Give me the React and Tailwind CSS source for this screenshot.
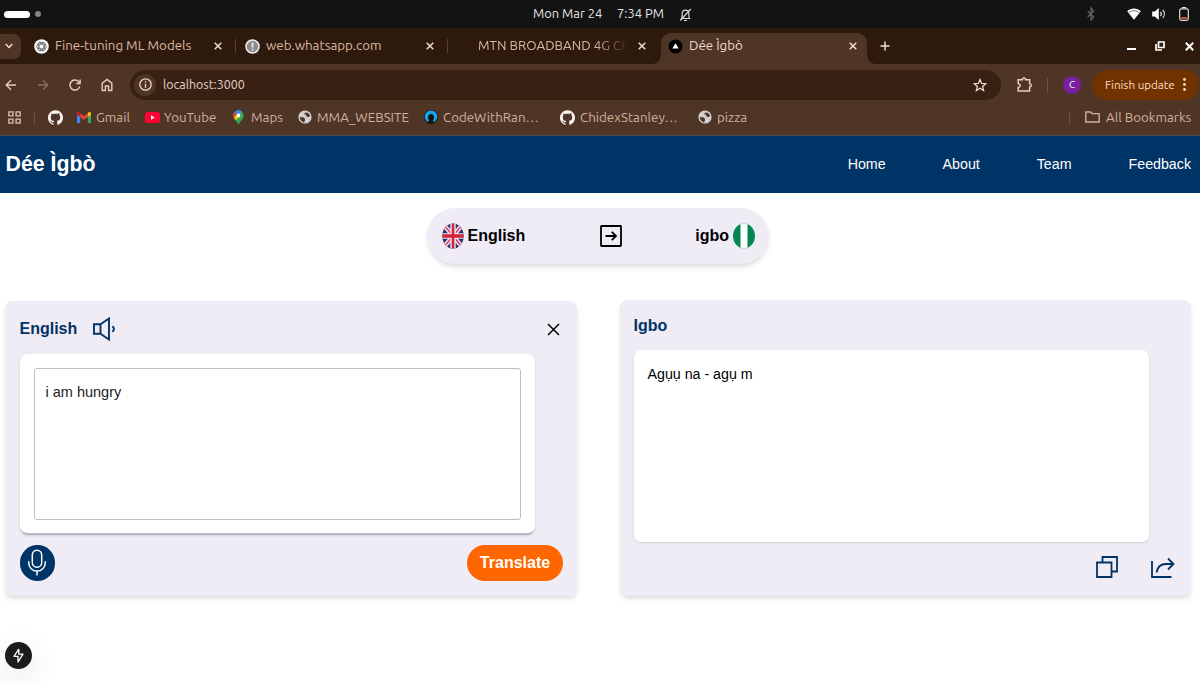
import clsx from 'clsx';
import { SiGithub } from 'react-icons/si';

const Globe = () => (
  <svg viewBox="0 0 14 14" className="w-[14px] h-[14px] shrink-0">
    <circle cx="7" cy="7" r="6.600" fill="#d2d0cf" />
    <path d="M1.700 7.200h3.600l1.700 1.600v1.700l-1 1.900C3.800 11.800 1.900 9.800 1.700 7.200zM7.200 2.600l3.200.5 1.700 2.700-1.600 1.400-2-.8-.2-1.600-2.200-.6z" fill="#4f3525" />
  </svg>
);

const Github = () => <SiGithub className="w-[15px] h-[15px] shrink-0 text-[#fdf6f0]" />;

const Gmail = () => (
  <svg viewBox="0 0 14 11" className="w-[14px] h-[11px] shrink-0">
    <path d="M0 2v8.2c0 .4.3.8.8.8h2.4V4.6z" fill="#4285f4" />
    <path d="M14 2v8.2c0 .4-.3.8-.8.8h-2.4V4.6z" fill="#34a853" />
    <path d="M3.2 1.3V5L7 7.8 10.800 5V1.300L7 4.200z" fill="#ea4335" />
    <path d="M0 1.700C0 .2 1.500-.4 2.600.6l.6.5V5L0 2.900z" fill="#c5221f" />
    <path d="M14 1.700C14 .2 12.500-.4 11.400.6l-.6.5V5L14 2.900z" fill="#fbbc04" />
  </svg>
);

const YouTube = () => (
  <svg viewBox="0 0 15 11" className="w-[15px] h-[11px] shrink-0">
    <rect width="15" height="11" rx="2.800" fill="#ff0033" />
    <path d="M6 3.300v4.400l3.800-2.200z" fill="#fff" />
  </svg>
);

const MapsPin = () => (
  <svg viewBox="0 0 11 15" className="w-[11px] h-[15px] shrink-0">
    <path d="M5.500 15C5.200 12 .3 9.500.3 5.400A5.200 5.200 0 0 1 5.500.2a5.200 5.200 0 0 1 5.200 5.200C10.700 9.500 5.800 12 5.500 15z" fill="#34a853" />
    <path d="M5.500.2A5.200 5.200 0 0 0 1.400 2.200L5.500 5.500 8.800 1.400A5 5 0 0 0 5.500.2z" fill="#4285f4" />
    <path d="M1.400 2.200A5.200 5.200 0 0 0 .9 7.800L4.200 4.400z" fill="#ea4335" />
    <path d="M.9 7.800c.5 1 1.200 1.800 1.800 2.500L7 6.400 4.100 4.500z" fill="#fbbc04" />
    <circle cx="5.500" cy="5.300" r="1.900" fill="#fff" />
  </svg>
);

const CodeWithRandom = () => (
  <svg viewBox="0 0 14 14" className="w-[14px] h-[14px] shrink-0">
    <circle cx="7" cy="7" r="7" fill="#15120f" />
    <path d="M3.800 12.200A6.300 6.300 0 1 1 10.200 12.200L9 10.200C11 8 10 4 7 4S3 8 5 10.200z" fill="#12a9ec" />
  </svg>
);

const Close = () => (
  <svg viewBox="0 0 8 8" className="w-[8px] h-[8px] shrink-0" fill="none" stroke="#f3ddd0" strokeWidth="1.500">
    <path d="M.7.700l6.600 6.600M7.300.700L.7 7.300" />
  </svg>
);

function SystemBar() {
  return (
    <div className="flex h-7 pb-px bg-[#131313] text-[#e4e4e4] text-[12.900px] items-center">
      <div className="ml-1 mt-px w-[26px] h-[7px] rounded-full bg-white"></div>
      <div className="ml-[5px] mt-px w-[6px] h-[6px] rounded-full bg-[#858585]"></div>
      <span className="ml-[492px] w-[84px] whitespace-nowrap">Mon Mar 24</span>
      <span className="w-[62px] whitespace-nowrap">7:34 PM</span>
      <svg viewBox="0 0 13 14" className="w-[13px] h-[14px] mt-[3px]" fill="none" stroke="#d8d8d8" strokeWidth="1.200">
        <path d="M2.500 10.500C3.500 9 3 7.500 3.200 5.500a3.300 3.300 0 0 1 6.600 0c.2 2-.3 3.500.7 5zM5 12.500h3M11.800 1L1.200 12.500" />
      </svg>
      <div className="ml-auto mt-px flex items-center mr-[11px]">
        <svg viewBox="0 0 8 14" className="w-[8px] h-[14px] mr-[32px]" fill="none" stroke="#666" strokeWidth="1.200">
          <path d="M.7 4l6 6L4 13V1l2.700 3-6 6" />
        </svg>
        <svg viewBox="0 0 14 12" className="w-[14px] h-[12px] mr-[11px]">
          <path d="M.2 3.300C4.100-.3 9.900-.3 13.800 3.300L7 11.800z" fill="#fff" />
          <path d="M2 4.500c3.200-2.400 6.800-2.400 10 0" fill="none" stroke="#131313" strokeWidth=".6" />
        </svg>
        <svg viewBox="0 0 14 12" className="w-[14px] h-[12px] mr-[13px]">
          <path d="M.2 3.500h2.600L6.800 0v12L2.800 8.500H.2z" fill="#fff" />
          <path d="M8.500 3.900c1 1.200 1 3 0 4.200M10.700 2c2.200 2.300 2.200 5.700 0 8" fill="none" stroke="#ddd" strokeWidth="1.200" />
        </svg>
        <svg viewBox="0 0 10 14" className="w-[10px] h-[14px]">
          <path d="M3 1.700V.500h4v1.200" fill="none" stroke="#ddd" />
          <rect x=".7" y="1.900" width="8.600" height="11.400" rx="1.800" fill="none" stroke="#dcdcdc" strokeWidth="1.200" />
          <rect x="2.200" y="10" width="5.600" height="2" fill="#d84b36" />
        </svg>
      </div>
    </div>
  );
}

function Tab({ icon, title, className, titleClass = "" }) {
  return (
    <div className={clsx("flex items-center h-full shrink-0", className)}>
      <div className="w-[15px] mr-[6px] shrink-0">{icon}</div>
      <span className={clsx("flex-1 whitespace-nowrap", titleClass)}>{title}</span>
      <Close />
    </div>
  );
}

function TabStrip() {
  return (
    <div className="flex h-9 bg-[#2e1a0c] text-[13.330px] text-[#d9b9a4] items-center">
      <div className="w-[21px] h-[25px] bg-[#4f3525] rounded-r-lg flex items-center justify-center pr-[3px] mr-[3px] shrink-0">
        <svg viewBox="0 0 8 6" className="w-[8px] h-[6px]" fill="none" stroke="#f3ddd0" strokeWidth="1.500"><path d="M.7 1L4 4.500 7.300 1" /></svg>
      </div>
      <Tab
        className="w-[211px] pl-[10px] pr-[13px]"
        title="Fine-tuning ML Models"
        icon={
          <svg viewBox="0 0 15 15" className="w-[15px] h-[15px]">
            <circle cx="7.500" cy="7.500" r="7.300" fill="#f7f7f7" />
            <g fill="none" stroke="#555" strokeWidth=".8">
              <ellipse cx="7.500" cy="7.500" rx="4.900" ry="2.500" />
              <ellipse cx="7.500" cy="7.500" rx="4.900" ry="2.500" transform="rotate(60 7.500 7.500)" />
              <ellipse cx="7.500" cy="7.500" rx="4.900" ry="2.500" transform="rotate(120 7.500 7.500)" />
            </g>
          </svg>
        }
      />
      <div className="w-px h-[14px] bg-[#5b402f] shrink-0"></div>
      <Tab
        className="w-[211px] pl-[9px] pr-[13px]"
        title="web.whatsapp.com"
        icon={
          <svg viewBox="0 0 15 15" className="w-[15px] h-[15px]">
            <circle cx="7.500" cy="7.500" r="6.500" fill="#8b8b8b" stroke="#f1f1f1" strokeWidth="1.500" />
            <path d="M7.500 3.500v5M7.500 9.800v1.800" stroke="#f1f1f1" strokeWidth="1.700" />
          </svg>
        }
      />
      <div className="w-px h-[14px] bg-[#5b402f] shrink-0"></div>
      <Tab
        className="w-[211px] pl-[9px] pr-[13px]"
        titleClass="[mask-image:linear-gradient(to_right,black_118px,transparent_150px)]"
        title="MTN BROADBAND 4G CP"
      />
      <div className="self-end w-[222px] h-full flex items-end -ml-[6px] shrink-0">
        <div className="w-2 h-2 shrink-0 bg-[radial-gradient(circle_at_0_0,transparent_7.500px,#4f3525_8px)]"></div>
        <div className="w-[206px] h-[31px] bg-[#4f3525] rounded-t-[10px]">
          <Tab
            className="pl-[7px] pb-[5px] pr-[10px] text-[#efdacc]"
            title="Dée Ìgbò"
            icon={
              <svg viewBox="0 0 15 15" className="w-[15px] h-[15px]">
                <circle cx="7.500" cy="7.500" r="7" fill="#000" />
                <path d="M7.500 4.200l3.200 5.400H4.300z" fill="#fff" />
              </svg>
            }
          />
        </div>
        <div className="w-2 h-2 shrink-0 bg-[radial-gradient(circle_at_100%_0,transparent_7.500px,#4f3525_8px)]"></div>
      </div>
      <svg viewBox="0 0 10 10" className="w-[10px] h-[10px] ml-[5px]" stroke="#f3ddd0" strokeWidth="1.500"><path d="M5 .5v9M.5 5h9" /></svg>
      <div className="ml-auto flex items-center mr-[6px]">
        <div className="w-[9px] h-[2px] bg-white mt-[6px] mr-[19px]"></div>
        <svg viewBox="0 0 10 10" className="w-[10px] h-[10px] mr-[20px]" fill="none" stroke="#fff" strokeWidth="1.700">
          <path d="M3.500 1h5.500v5.500H3.500zM1 3v6h6" />
        </svg>
        <svg viewBox="0 0 9 9" className="w-[9px] h-[9px]" stroke="#fff" strokeWidth="2"><path d="M.8.800l7.400 7.400M8.200.800L.8 8.200" /></svg>
      </div>
    </div>
  );
}

function Toolbar() {
  return (
    <div className="flex h-[41px] items-center text-[#f0cdb8]">
      <svg viewBox="0 0 12 12" className="w-[12px] h-[12px] ml-[5px] mr-[20px]" fill="none" stroke="currentColor" strokeWidth="1.400"><path d="M11 6H1.500M6 1.200L1.200 6 6 10.800" /></svg>
      <svg viewBox="0 0 12 12" className="w-[12px] h-[12px] mr-[20px]" fill="none" stroke="#8e6e5a" strokeWidth="1.400"><path d="M1 6h9.500M6 1.200L10.800 6 6 10.800" /></svg>
      <svg viewBox="0 0 12 12" className="w-[12px] h-[12px] mr-[20px]" fill="none" stroke="currentColor" strokeWidth="1.400"><path d="M10.800 7.400A5 5 0 1 1 9.700 2.700L11 4M11.100.500v4H7.200" /></svg>
      <svg viewBox="0 0 12 14" className="w-[12px] h-[14px] mr-[17px]" fill="none" stroke="currentColor" strokeWidth="1.400"><path d="M1.200 5.200L6 1.500l4.800 3.700v7.300H7.600V8H4.400v4.500H1.200z" /></svg>
      <div className="w-[871px] h-[30px] rounded-full bg-[#382013] flex items-center pl-1 pr-[14px] shrink-0">
        <div className="w-[22px] h-[22px] rounded-full bg-[#4f3525] flex items-center justify-center mr-[7px]">
          <svg viewBox="0 0 13 13" className="w-[13px] h-[13px]" fill="none" stroke="#f0d6c6" strokeWidth="1.300">
            <circle cx="6.500" cy="6.500" r="5.700" />
            <path d="M6.500 5.700v4M6.500 3.200v1.400" />
          </svg>
        </div>
        <span className="text-[12.440px] text-[#e6d3c8]">localhost:3000</span>
        <svg viewBox="0 0 14 14" className="w-[14px] h-[14px] ml-auto" fill="none" stroke="#f0d6c6" strokeWidth="1.300">
          <path d="M7 1.500l1.600 3.900 4.200.3-3.200 2.700 1 4.100L7 10.300l-3.600 2.200 1-4.100L1.200 5.700l4.200-.3z" />
        </svg>
      </div>
      <svg viewBox="0 0 15 15" className="w-[15px] h-[15px] ml-[16px]" fill="none" stroke="currentColor" strokeWidth="1.500">
        <path d="M1.200 2.700h4.200C5.500.400 8.500.400 8.600 2.700h4v4c2.200.1 2.200 3.200 0 3.300v4H1.200v-3.600c2.700-.4 2.700-3.600 0-4z" />
      </svg>
      <div className="w-px h-[14px] bg-[#705341] ml-[15px] mr-[15px]"></div>
      <div className="w-[18px] h-[18px] rounded-full bg-[#7b1fa2] text-white text-[10px] leading-[18px] text-center">C</div>
      <div className="ml-[11px] w-[107px] h-[30px] bg-[#703300] rounded-full flex items-center pl-[13px] text-[#ffdbc4] text-[11.600px] shrink-0">
        <span className="w-[78px] whitespace-nowrap">Finish update</span>
        <svg viewBox="0 0 3 13" className="w-[3px] h-[13px]" fill="#ffdbc4">
          <circle cx="1.500" cy="1.500" r="1.400" />
          <circle cx="1.500" cy="6.500" r="1.400" />
          <circle cx="1.500" cy="11.500" r="1.400" />
        </svg>
      </div>
    </div>
  );
}

function Bookmark({ icon, label, className }) {
  return (
    <div className={clsx("flex items-center shrink-0 whitespace-nowrap", className)}>
      {icon}
      <span>{label}</span>
    </div>
  );
}

function Bookmarks() {
  return (
    <div className="flex h-[30px] pb-[5px] items-center text-[13.330px] text-[#d0b09d]">
      <svg viewBox="0 0 13 13" className="w-[13px] h-[13px] ml-2 mr-[13px]" fill="none" stroke="#e0bda9" strokeWidth="1.400">
        <path d="M.9.900h4v4h-4zM8.100.900h4v4h-4zM.9 8.100h4v4h-4zM8.100 8.100h4v4h-4z" />
      </svg>
      <div className="w-px h-[14px] bg-[#705341] mr-[13px]"></div>
      <div className="w-[29px]"><Github /></div>
      <Bookmark className="w-[68px] gap-[5px]" icon={<Gmail />} label="Gmail" />
      <Bookmark className="w-[88px] gap-[4px]" icon={<YouTube />} label="YouTube" />
      <Bookmark className="w-[65px] gap-[7px]" icon={<MapsPin />} label="Maps" />
      <Bookmark className="w-[126px] gap-[5px]" icon={<Globe />} label="MMA_WEBSITE" />
      <Bookmark className="w-[136px] gap-[5px]" icon={<CodeWithRandom />} label="CodeWithRan…" />
      <Bookmark className="w-[138px] gap-[5px]" icon={<Github />} label="ChidexStanley…" />
      <Bookmark className="w-[60px] gap-[5px]" icon={<Globe />} label="pizza" />
      <div className="w-px h-[14px] bg-[#705341] ml-auto mr-[15px]"></div>
      <Bookmark
        className="w-[115px] gap-[6px]"
        label="All Bookmarks"
        icon={
          <svg viewBox="0 0 15 12" className="w-[15px] h-[12px]" fill="none" stroke="currentColor" strokeWidth="1.400"><path d="M.8 1h4.700l1.500 1.600h7.200V11H.8z" /></svg>
        }
      />
    </div>
  );
}

function Navbar() {
  return (
    <header className="flex h-[57px] bg-[#003366] text-white items-center pl-[5.500px] pr-[9px] justify-between">
      <h1 className="font-bold text-[21.330px]">Dée Ìgbò</h1>
      <nav className="flex gap-[57px] text-[14.220px]">
        <a>Home</a>
        <a>About</a>
        <a>Team</a>
        <a>Feedback</a>
      </nav>
    </header>
  );
}

const UkFlag = () => (
  <svg viewBox="0 0 22 26" className="w-[22px] h-[26px]">
    <clipPath id="uk"><ellipse cx="11" cy="13" rx="10.700" ry="12.600" /></clipPath>
    <g clipPath="url(#uk)">
      <rect width="22" height="26" fill="#27306f" />
      <path d="M-3 -4L25 30M25 -4L-3 30" stroke="#ecdcea" strokeWidth="4.500" />
      <path d="M-3 -4L25 30M25 -4L-3 30" stroke="#d5475f" strokeWidth="1.500" />
      <path d="M11 0v26M0 13h22" stroke="#f0dfe8" strokeWidth="5.500" />
      <path d="M11 0v26" stroke="#ce2339" strokeWidth="2.500" />
      <path d="M0 13h22" stroke="#ce2339" strokeWidth="3.500" />
    </g>
  </svg>
);

const NigeriaFlag = () => (
  <svg viewBox="0 0 22 26" className="w-[22px] h-[26px]">
    <clipPath id="ng"><ellipse cx="11" cy="13" rx="11" ry="12.500" /></clipPath>
    <g clipPath="url(#ng)">
      <rect width="22" height="26" fill="#008850" />
      <rect x="7.500" width="7" height="26" fill="#fff" />
    </g>
  </svg>
);

function LanguagePill() {
  return (
    <div className="mt-[15px] ml-[427px] w-[342px] h-[56px] rounded-full bg-[#f0ecf6] shadow-md flex items-center justify-between pl-[14.500px] pr-[14px] text-base font-bold text-black">
      <div className="flex items-center gap-1 w-[120px]">
        <UkFlag />
        English
      </div>
      <svg viewBox="0 0 22 22" className="w-[22px] h-[22px] ml-[25px]" fill="none" stroke="#000" strokeWidth="1.800">
        <rect x="1" y="1" width="20" height="20" rx=".5" />
        <path d="M5.500 11h10M11.800 6.800L16 11l-4.200 4.200" />
      </svg>
      <div className="flex items-center gap-1 w-[120px] justify-end">
        igbo
        <NigeriaFlag />
      </div>
    </div>
  );
}

function SourceCard() {
  return (
    <section className="w-[572px] h-[295px] mt-px rounded-[7px] bg-[#f0ecf6] shadow-md pl-[14.500px] pr-[14px] flex flex-col">
      <div className="flex items-center h-[53px] pt-[3px] text-[#003366]">
        <h2 className="font-bold text-base w-[73px]">English</h2>
        <svg viewBox="0 0 23 24" className="w-[23px] h-[24px]" fill="none" stroke="currentColor" strokeWidth="1.900">
          <path d="M1 7.200h6.500v9.600H1zM7.500 7.200L16 1.500v21l-8.500-5.700" />
          <path d="M19.300 9.200c2.200 1.500 2.200 4.100 0 5.600" />
        </svg>
        <svg viewBox="0 0 13 13" className="w-[13px] h-[13px] ml-auto mr-[3px]" stroke="#000" strokeWidth="1.500"><path d="M1 1l11 11M12 1L1 12" /></svg>
      </div>
      <div className="w-[515.500px] h-[181px] bg-white rounded-[8px] border-b-2 border-[#b9bac2] shadow-sm p-[14px]">
        <div className="w-[487px] h-[152px] border border-[#bcbec3] rounded-[3px] px-[11px] pt-[13px] text-[14.500px] leading-[21px] text-[#222]">i am hungry</div>
      </div>
      <div className="flex items-center justify-between mt-[10px]">
        <button className="w-[35.500px] h-[35.500px] rounded-full bg-[#003366] flex items-center justify-center">
          <svg viewBox="0 0 20 27" className="w-[20px] h-[27px]" fill="none" stroke="#fff" strokeWidth="1.500">
            <rect x="5.300" y="1.200" width="9.400" height="17" rx="4.700" />
            <path d="M1.700 12.300v1.500a8.300 8.300 0 0 0 16.600 0v-1.500M10 22v4.500" />
          </svg>
        </button>
        <button className="w-[96px] h-[35.500px] rounded-full bg-[#ff6600] text-white font-bold text-base">Translate</button>
      </div>
    </section>
  );
}

function ResultCard() {
  return (
    <section className="w-[571.500px] h-[296px] rounded-[7px] bg-[#f0ecf6] shadow-md px-[14px] flex flex-col">
      <h2 className="h-[50px] pt-[14px] font-bold text-base text-[#003366]">Igbo</h2>
      <div className="w-[515.500px] h-[192px] bg-white rounded-[7px] shadow p-[14px] text-[14.220px] leading-[21px] text-black">Agụụ na - agụ m</div>
      <div className="flex justify-end items-center mt-[14px] mr-[2px] gap-[33px] text-[#003366]">
        <svg viewBox="0 0 22 22" className="w-[22px] h-[22px]" fill="none" stroke="currentColor" strokeWidth="1.800">
          <path d="M1 6.500h14.500V21H1zM6.500 6.500V1H21v14.500h-5.500" />
        </svg>
        <svg viewBox="0 0 24 21" className="w-[24px] h-[21px]" fill="none" stroke="currentColor" strokeWidth="1.800">
          <path d="M1 4v16h19.500" />
          <path d="M5.500 15.500C6.500 10 10 7 15 7h7M17 1.500L22.500 7 17 12.500" />
        </svg>
      </div>
    </section>
  );
}

export default function App() {
  return (
    <div className="w-[1200px] h-[683px] overflow-hidden bg-white flex flex-col font-['Liberation_Sans',sans-serif]">
      <div className="bg-[#4f3525] border-b border-[#4d4c51] font-['Ubuntu','Noto_Sans',sans-serif]">
        <SystemBar />
        <TabStrip />
        <Toolbar />
        <Bookmarks />
      </div>
      <Navbar />
      <main className="flex-1 relative">
        <LanguagePill />
        <div className="flex justify-between mt-[36px] pl-[5px] pr-[9px]">
          <SourceCard />
          <ResultCard />
        </div>
        <div className="absolute left-[5px] bottom-[14px] w-[27px] h-[27px] rounded-full bg-[#1c1c1c] shadow-[0_8px_30px_rgba(0,0,0,0.12)] flex items-center justify-center">
          <svg viewBox="0 0 11 15" className="w-[11px] h-[15px]" fill="none" stroke="#fff" strokeWidth="1.300" strokeLinejoin="round">
            <path d="M5.800 1L1 8.300h3.500M5.800 1v5.200H10L5 14V8.300H2" />
          </svg>
        </div>
      </main>
    </div>
  );
}
